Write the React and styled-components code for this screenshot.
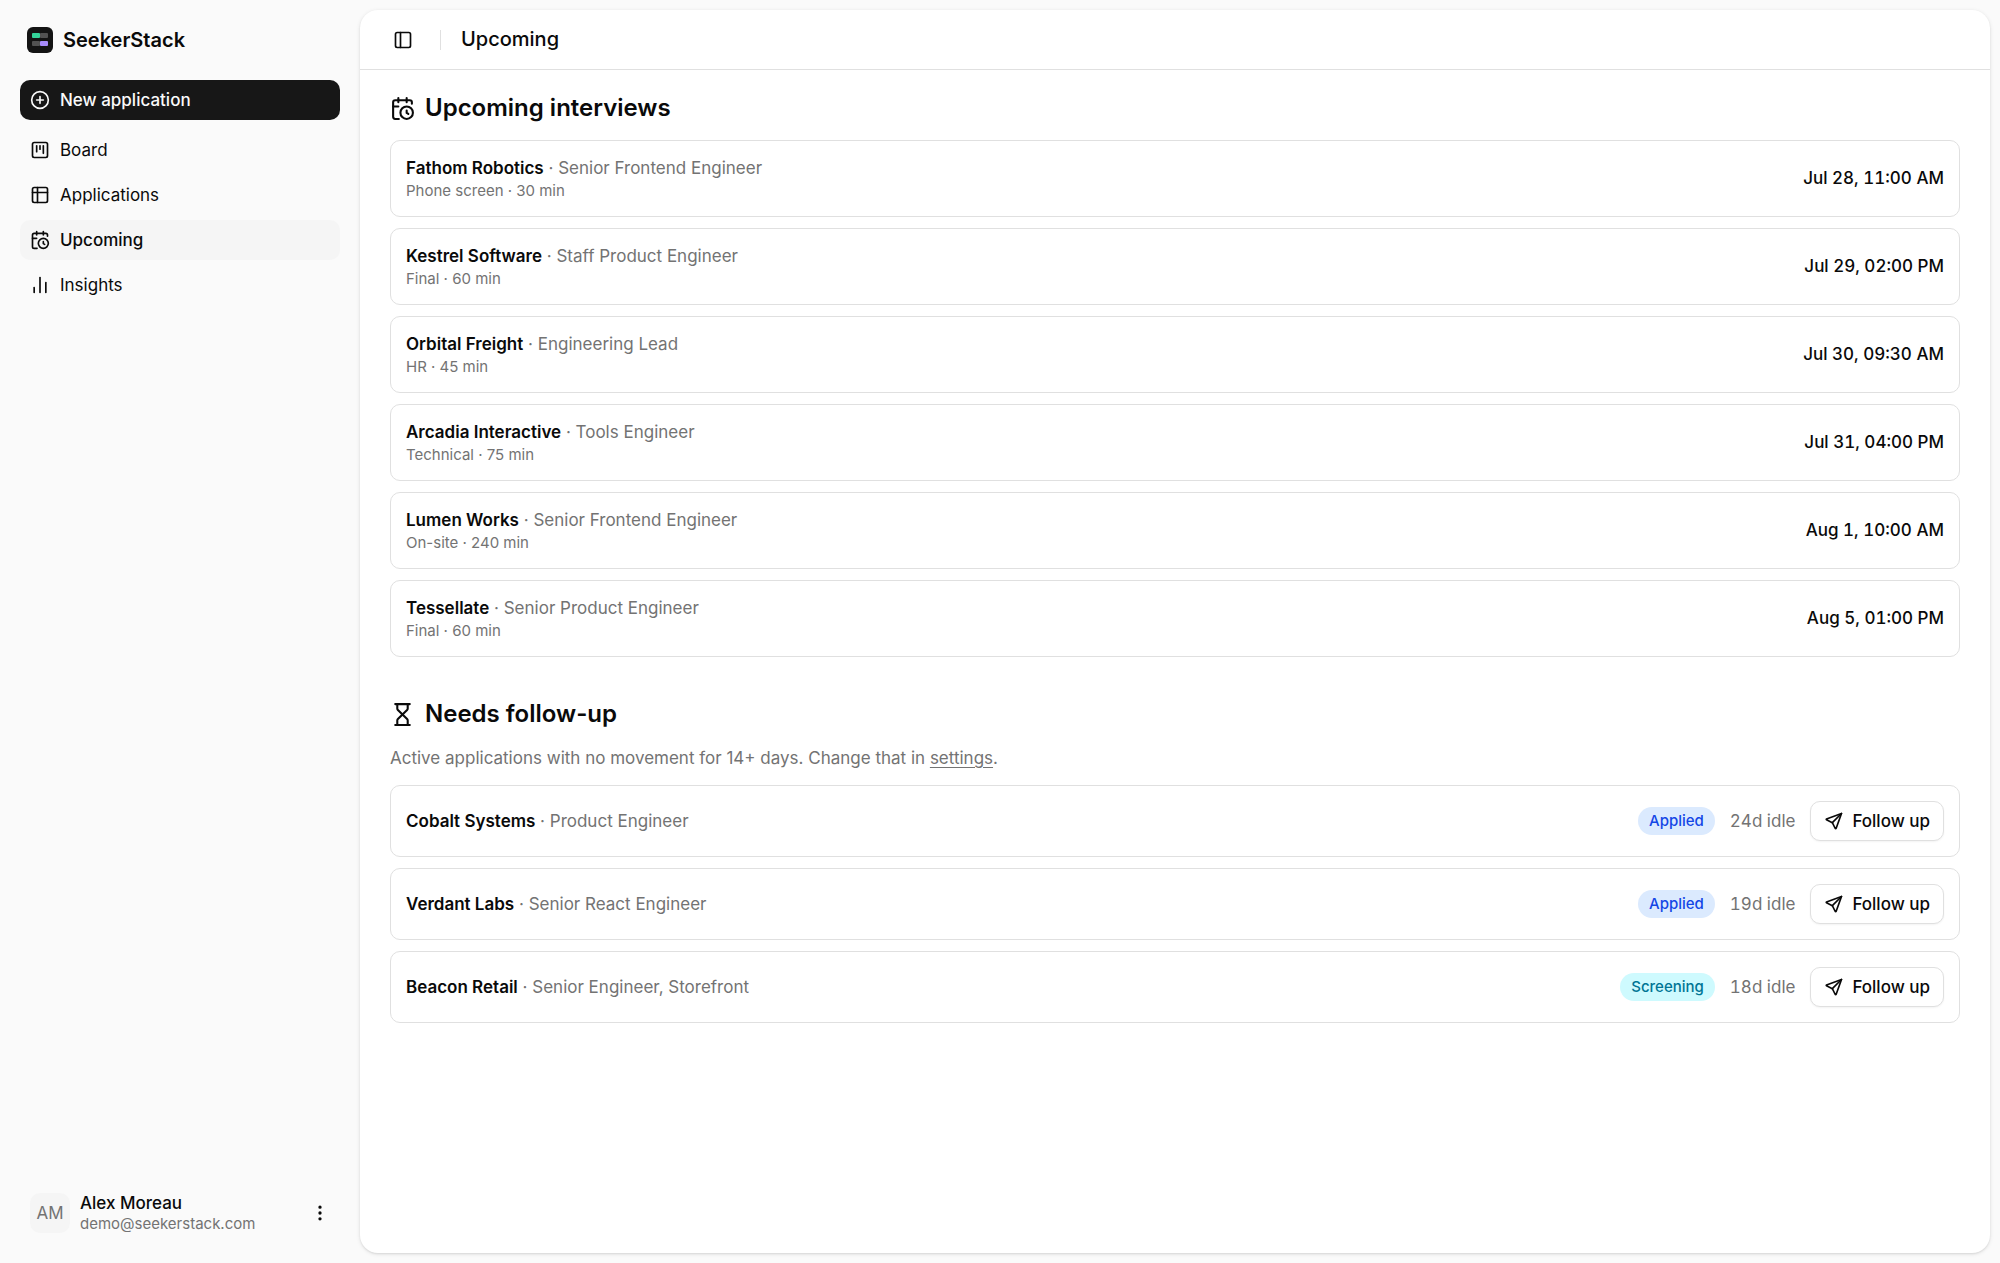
import React from "react";
import styled, { createGlobalStyle, css } from "styled-components";
import {
  CalendarClock,
  ChartNoAxesColumn,
  CirclePlus,
  EllipsisVertical,
  Hourglass,
  PanelLeft,
  SquareKanban,
} from "lucide-react";

const GlobalStyle = createGlobalStyle`
  *, *::before, *::after {
    box-sizing: border-box;
  }
  body {
    margin: 0;
    background: #fafafa;
    color: #0a0a0a;
    font-family: Inter, "Liberation Sans", sans-serif;
    font-size: 17px;
    line-height: 25px;
    -webkit-font-smoothing: antialiased;
  }
  h1, h2, p, ul {
    margin: 0;
    padding: 0;
  }
  ul {
    list-style: none;
  }
  button {
    font: inherit;
    color: inherit;
    cursor: pointer;
  }
`;

const Layout = styled.div`
  display: flex;
  min-height: 100vh;
  background: #fafafa;
`;

const Sidebar = styled.aside`
  display: flex;
  flex-direction: column;
  flex: 0 0 360px;
  padding: 20px;
`;

const Brand = styled.a`
  display: flex;
  align-items: center;
  gap: 10px;
  height: 40px;
  padding: 0 7px;
  color: inherit;
  font-size: 20px;
  font-weight: 600;
  text-decoration: none;
`;

const Menu = styled.nav`
  display: flex;
  flex-direction: column;
  flex: 1;
  margin-top: 20px;
`;

const menuRow = css`
  display: flex;
  align-items: center;
  gap: 10px;
  width: 100%;
  height: 40px;
  padding: 0 10px;
  border: 0;
  border-radius: 10px;
`;

const NewButton = styled.button`
  ${menuRow}
  background: #171717;
  color: #fafafa;
  font-weight: 500;
`;

const MenuList = styled.ul`
  display: flex;
  flex-direction: column;
  gap: 5px;
  margin-top: 10px;
`;

const MenuLink = styled.a`
  ${menuRow}
  background: ${(props) => (props.$active ? "#f5f5f5" : "transparent")};
  color: inherit;
  font-weight: ${(props) => (props.$active ? 500 : 400)};
  text-decoration: none;
`;

const User = styled.div`
  display: flex;
  align-items: center;
  gap: 10px;
  height: 60px;
  padding: 0 10px;
`;

const Avatar = styled.span`
  display: flex;
  align-items: center;
  justify-content: center;
  width: 40px;
  height: 40px;
  border-radius: 10px;
  background: #f5f5f5;
  color: #737373;
`;

const UserText = styled.div`
  display: flex;
  flex-direction: column;
  flex: 1;
  min-width: 0;
`;

const UserName = styled.span`
  font-weight: 500;
  line-height: 22px;
`;

const UserMail = styled.span`
  color: #737373;
  font-size: 15px;
  line-height: 20px;
`;

const IconButton = styled.button`
  display: flex;
  align-items: center;
  justify-content: center;
  width: ${(props) => props.$size}px;
  height: ${(props) => props.$size}px;
  padding: 0;
  border: 0;
  background: transparent;
`;

const Main = styled.main`
  flex: 1;
  min-width: 0;
  margin: 10px 10px 10px 0;
  border-radius: 18px;
  background: #fff;
  box-shadow: 0 1px 4px rgba(0, 0, 0, 0.1), 0 1px 2px rgba(0, 0, 0, 0.08);
`;

const Header = styled.header`
  display: flex;
  align-items: center;
  height: 60px;
  padding: 0 25px;
  border-bottom: 1px solid #e0e0e0;
`;

const Divider = styled.span`
  width: 1px;
  height: 20px;
  margin: 0 20px;
  background: #e0e0e0;
`;

const PageTitle = styled.h1`
  font-size: 20px;
  font-weight: 500;
`;

const Content = styled.div`
  display: flex;
  flex-direction: column;
  gap: 39px;
  padding: 20px 30px;
`;

const Section = styled.section`
  display: flex;
  flex-direction: column;
  gap: 14px;
`;

const SectionTitle = styled.h2`
  display: flex;
  align-items: center;
  gap: 10px;
  font-size: 24px;
  font-weight: 600;
  line-height: 36px;
`;

const Hint = styled.p`
  color: #737373;
  line-height: 25px;
`;

const HintLink = styled.a`
  color: inherit;
  text-underline-offset: 3px;
`;

const List = styled.ul`
  display: flex;
  flex-direction: column;
  gap: 11px;
`;

const Card = styled.li`
  display: flex;
  align-items: center;
  gap: 15px;
  padding: 15px;
  border: 1px solid #e0e0e0;
  border-radius: 10px;
`;

const CardText = styled.div`
  flex: 1;
  min-width: 0;
`;

const Company = styled.span`
  font-weight: 600;
`;

const Muted = styled.span`
  color: #737373;
`;

const Meta = styled.div`
  color: #737373;
  font-size: 15px;
  line-height: 20px;
`;

const When = styled.time`
  font-weight: 500;
  font-variant-numeric: tabular-nums;
`;

const Idle = styled.span`
  color: #737373;
  font-variant-numeric: tabular-nums;
`;

const stageColors = {
  Applied: css`
    background: #dbeafe;
    color: #1447e6;
  `,
  Screening: css`
    background: #cefafe;
    color: #007595;
  `,
};

const Badge = styled.span`
  padding: 4px 11px;
  border-radius: 14px;
  font-size: 15px;
  font-weight: 500;
  line-height: 20px;
  ${(props) => stageColors[props.$stage]}
`;

const FollowButton = styled.button`
  display: flex;
  align-items: center;
  gap: 8px;
  height: 40px;
  padding: 0 13px;
  border: 1px solid #e0e0e0;
  border-radius: 10px;
  background: #fff;
  box-shadow: 0 1px 2px rgba(0, 0, 0, 0.05);
  font-weight: 500;
`;

const Logo = () => (
  <svg width="26" height="26" viewBox="0 0 26 26" aria-hidden="true">
    <rect width="26" height="26" rx="6" fill="#141414" />
    <rect x="5" y="6" width="8" height="5" rx="1" fill="#34d399" />
    <rect x="13" y="6" width="8" height="5" rx="1" fill="#525252" />
    <rect x="5" y="14" width="8" height="5" rx="1" fill="#525252" />
    <rect x="13" y="14" width="8" height="5" rx="1" fill="#a78bfa" />
  </svg>
);

const StrokeIcon = ({ size = 20, children }) => (
  <svg
    width={size}
    height={size}
    viewBox="0 0 24 24"
    fill="none"
    stroke="currentColor"
    strokeWidth="2"
    strokeLinecap="round"
    strokeLinejoin="round"
    aria-hidden="true"
  >
    {children}
  </svg>
);

const TableIcon = () => (
  <StrokeIcon>
    <rect x="3" y="3" width="18" height="18" rx="2" />
    <path d="M3 9h18" />
    <path d="M9 3v18" />
  </StrokeIcon>
);

const SendIcon = () => (
  <StrokeIcon>
    <path d="M10 14L21 3" />
    <path d="M21 3l-6.5 18a.55 .55 0 0 1 -1 0l-3.5 -7l-7 -3.5a.55 .55 0 0 1 0 -1l18 -6.5" />
  </StrokeIcon>
);

const menu = [
  { label: "Board", icon: <SquareKanban size={20} /> },
  { label: "Applications", icon: <TableIcon /> },
  { label: "Upcoming", icon: <CalendarClock size={20} />, active: true },
  { label: "Insights", icon: <ChartNoAxesColumn size={20} /> },
];

const interviews = [
  { company: "Fathom Robotics", role: "Senior Frontend Engineer", meta: "Phone screen · 30 min", when: "Jul 28, 11:00 AM" },
  { company: "Kestrel Software", role: "Staff Product Engineer", meta: "Final · 60 min", when: "Jul 29, 02:00 PM" },
  { company: "Orbital Freight", role: "Engineering Lead", meta: "HR · 45 min", when: "Jul 30, 09:30 AM" },
  { company: "Arcadia Interactive", role: "Tools Engineer", meta: "Technical · 75 min", when: "Jul 31, 04:00 PM" },
  { company: "Lumen Works", role: "Senior Frontend Engineer", meta: "On-site · 240 min", when: "Aug 1, 10:00 AM" },
  { company: "Tessellate", role: "Senior Product Engineer", meta: "Final · 60 min", when: "Aug 5, 01:00 PM" },
];

const followUps = [
  { company: "Cobalt Systems", role: "Product Engineer", stage: "Applied", idle: "24d idle" },
  { company: "Verdant Labs", role: "Senior React Engineer", stage: "Applied", idle: "19d idle" },
  { company: "Beacon Retail", role: "Senior Engineer, Storefront", stage: "Screening", idle: "18d idle" },
];

function App() {
  return (
    <Layout>
      <GlobalStyle />

      <Sidebar>
        <Brand href="#">
          <Logo />
          SeekerStack
        </Brand>
        <Menu>
          <NewButton type="button">
            <CirclePlus size={20} />
            New application
          </NewButton>
          <MenuList>
            {menu.map((item) => (
              <li key={item.label}>
                <MenuLink href="#" $active={item.active}>
                  {item.icon}
                  {item.label}
                </MenuLink>
              </li>
            ))}
          </MenuList>
        </Menu>
        <User>
          <Avatar>AM</Avatar>
          <UserText>
            <UserName>Alex Moreau</UserName>
            <UserMail>demo@seekerstack.com</UserMail>
          </UserText>
          <IconButton type="button" $size={20} aria-label="Account menu">
            <EllipsisVertical size={20} />
          </IconButton>
        </User>
      </Sidebar>

      <Main>
        <Header>
          <IconButton type="button" $size={35} aria-label="Toggle sidebar">
            <PanelLeft size={20} />
          </IconButton>
          <Divider />
          <PageTitle>Upcoming</PageTitle>
        </Header>

        <Content>
          <Section>
            <SectionTitle>
              <CalendarClock size={25} />
              Upcoming interviews
            </SectionTitle>
            <List>
              {interviews.map((item) => (
                <Card key={item.company}>
                  <CardText>
                    <div>
                      <Company>{item.company}</Company>
                      <Muted> · {item.role}</Muted>
                    </div>
                    <Meta>{item.meta}</Meta>
                  </CardText>
                  <When>{item.when}</When>
                </Card>
              ))}
            </List>
          </Section>

          {/* Applications that have gone quiet */}
          <Section>
            <SectionTitle>
              <Hourglass size={25} />
              Needs follow-up
            </SectionTitle>
            <Hint>
              Active applications with no movement for 14+ days. Change that in{" "}
              <HintLink href="#">settings</HintLink>.
            </Hint>
            <List>
              {followUps.map((item) => (
                <Card key={item.company}>
                  <CardText>
                    <Company>{item.company}</Company>
                    <Muted> · {item.role}</Muted>
                  </CardText>
                  <Badge $stage={item.stage}>{item.stage}</Badge>
                  <Idle>{item.idle}</Idle>
                  <FollowButton type="button">
                    <SendIcon />
                    Follow up
                  </FollowButton>
                </Card>
              ))}
            </List>
          </Section>
        </Content>
      </Main>
    </Layout>
  );
}

export default App;
